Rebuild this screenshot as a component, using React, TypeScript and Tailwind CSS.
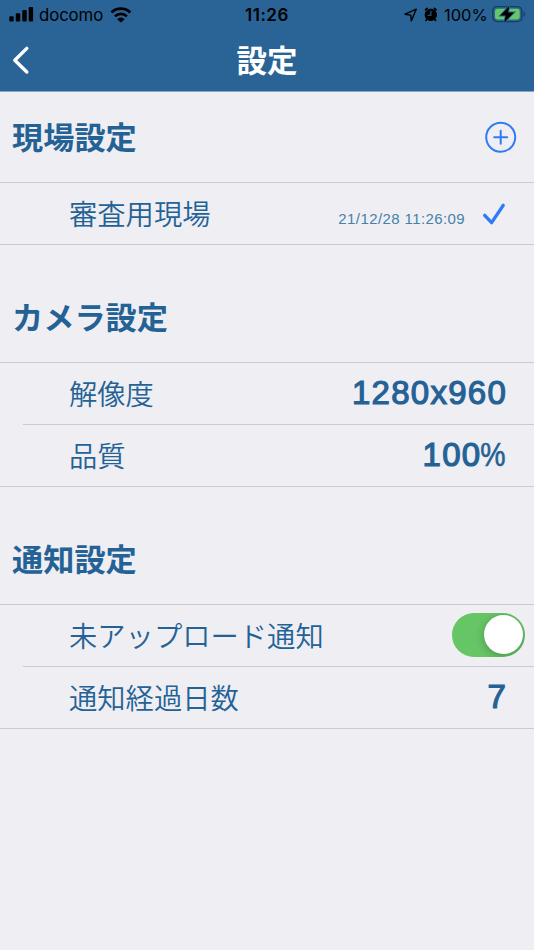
import type { ReactNode } from "react"

function StatusBar() {
  return (
    <div className="relative flex h-[30px] items-center justify-between text-black">
      <div className="flex items-center">
        <svg width="134" height="30" viewBox="0 0 134 30" fill="currentColor">
          <rect x="9.3" y="16.3" width="4.4" height="5.2" rx="1" />
          <rect x="15.8" y="13.3" width="4.4" height="8.2" rx="1" />
          <rect x="22.3" y="10" width="4.4" height="11.5" rx="1" />
          <rect x="28.7" y="7" width="4.4" height="14.5" rx="1" />
          <path d="M117.1 19.2a5.3 5.3 0 0 1 7.6 0l-3.8 3.4z" />
          <path d="M114.9 16.4a8.5 8.5 0 0 1 12 0" fill="none" stroke="currentColor" strokeWidth="2.6" />
          <path d="M111.5 12.5a13.5 13.5 0 0 1 18.8 0" fill="none" stroke="currentColor" strokeWidth="2.8" />
        </svg>
        <span className="absolute left-[39px] text-[16.8px] leading-[30px] tracking-[-0.1px]">docomo</span>
      </div>
      <span className="absolute left-[245px] text-[17px] leading-[30px] font-semibold tracking-[0.5px]">11:26</span>
      <div className="flex items-center">
        <svg width="40" height="30" viewBox="0 0 40 30" fill="none" stroke="currentColor">
          <path d="M15.2 9.2 4 14.2l5.7.9.6 5.8z" strokeWidth="1.4" strokeLinejoin="round" />
          <circle cx="29.8" cy="14.8" r="5.7" fill="currentColor" strokeWidth="1" />
          <path d="m24.6 9.8 1.6-1.4M35 9.8l-1.6-1.4M26.3 19.2l-1.3 1.2M33.3 19.2l1.3 1.2" strokeWidth="1.8" strokeLinecap="round" />
          <path d="M29.9 11v4.3h-3.4" stroke="#2a6496" strokeWidth="1.1" />
        </svg>
        <span className="w-[49px] pl-[3px] text-[16.5px] leading-[30px] whitespace-nowrap">100%</span>
        <svg width="44" height="30" viewBox="0 0 44 30">
          <rect x="2.8" y="6.6" width="29" height="15" rx="4.2" fill="none" stroke="#173f62" strokeWidth="1.4" />
          <path d="M33.5 11.5c2.1.8 2.1 4.4 0 5.2z" fill="#173f62" />
          <rect x="5" y="8.8" width="24.7" height="10.6" rx="2.4" fill="#66c765" />
          <path d="M19.3 6 10.3 15.6h5.5L14.2 22.4 24 12.5h-6z" stroke="#2a6496" strokeWidth="1.8" />
          <path d="M19.3 6 10.3 15.6h5.5L14.2 22.4 24 12.5h-6z" fill="#000" />
        </svg>
      </div>
    </div>
  )
}

function SectionTitle({ children, action }: { children: string; action?: ReactNode }) {
  return (
    <div className="flex h-[90px] items-center justify-between pr-[17px] pl-3">
      <h2 className="pb-0.5 text-[31.2px] leading-[46px] font-bold">{children}</h2>
      {action}
    </div>
  )
}

function Row({ label, children }: { label: string; children: ReactNode }) {
  return (
    <div className="flex h-[61px] items-center justify-between pl-[69px]">
      <span className="pb-px text-[28.3px] leading-[42px] font-[350] whitespace-nowrap">{label}</span>
      {children}
    </div>
  )
}

function Value({ children }: { children: ReactNode }) {
  return (
    <span className="pr-[27px] pb-px font-['Liberation_Sans'] text-[33px] leading-[40px] tracking-[1.25px] [-webkit-text-stroke:1.2px_#246296]">
      {children}
    </span>
  )
}

export default function App() {
  return (
    <div className="h-[950px] w-[534px] overflow-hidden bg-[#efeef3] font-['Noto_Sans_CJK_JP',sans-serif] text-[#246296]">
      <header className="h-[92px] border-b border-[#8ba6bf] bg-[#2a6496] font-['Inter','Noto_Sans_CJK_JP',sans-serif]">
        <StatusBar />
        <div className="relative flex h-[61px] items-center justify-center text-white">
          <svg className="absolute left-0" width="40" height="61" viewBox="0 0 40 61" fill="none" stroke="currentColor" strokeWidth="3.4" strokeLinecap="round" strokeLinejoin="round">
            <path d="M26.8 18.4 14.8 30.2 26.8 42" />
          </svg>
          <h1 className="text-[30.5px] leading-[44px] font-bold">設定</h1>
        </div>
      </header>

      <main>
        <section>
          <SectionTitle
            action={
              <svg width="32" height="32" viewBox="0 0 32 32" fill="none" stroke="#2f7bf6" strokeWidth="2" strokeLinecap="round">
                <circle cx="15.7" cy="16.2" r="14.5" />
                <path d="M9.2 16.2h13M15.7 9.7v13" />
              </svg>
            }
          >
            現場設定
          </SectionTitle>
          <div className="border-y border-[#cbcad0]">
            <Row label="審査用現場">
              <div className="flex items-center pr-7">
                <span className="pt-[10px] font-['Liberation_Sans'] text-[15px] leading-5 tracking-[0.4px] text-[#4581aa]">21/12/28 11:26:09</span>
                <svg className="ml-[17px]" width="24" height="24" viewBox="0 0 24 24" fill="none" stroke="#2f7bf6" strokeWidth="3.4" strokeLinecap="round" strokeLinejoin="round">
                  <path d="m2.7 13.4 6.9 7.2L21.2 3.4" />
                </svg>
              </div>
            </Row>
          </div>
        </section>

        <section className="pt-[27px]">
          <SectionTitle>カメラ設定</SectionTitle>
          <div className="border-y border-[#cbcad0]">
            <Row label="解像度">
              <Value>1280x960</Value>
            </Row>
            <div className="ml-[23px] h-px bg-[#cbcad0]" />
            <Row label="品質">
              <Value>
                100<span className="-ml-[5px] inline-block origin-right scale-x-[0.86] [-webkit-text-stroke:0.6px_#246296]">%</span>
              </Value>
            </Row>
          </div>
        </section>

        <section className="pt-[27px]">
          <SectionTitle>通知設定</SectionTitle>
          <div className="border-y border-[#cbcad0]">
            <Row label="未アップロード通知">
              <button role="switch" aria-checked="true" className="mr-[9px] mb-0.5 flex h-11 w-[73px] items-center justify-end overflow-hidden rounded-full bg-[#66c565] pr-[2.5px]">
                <span className="size-[39px] rounded-full bg-white shadow-[0_2px_8px_rgba(0,0,0,0.25)]" />
              </button>
            </Row>
            <div className="ml-[23px] h-px bg-[#cbcad0]" />
            <Row label="通知経過日数">
              <Value>7</Value>
            </Row>
          </div>
        </section>
      </main>
    </div>
  )
}
